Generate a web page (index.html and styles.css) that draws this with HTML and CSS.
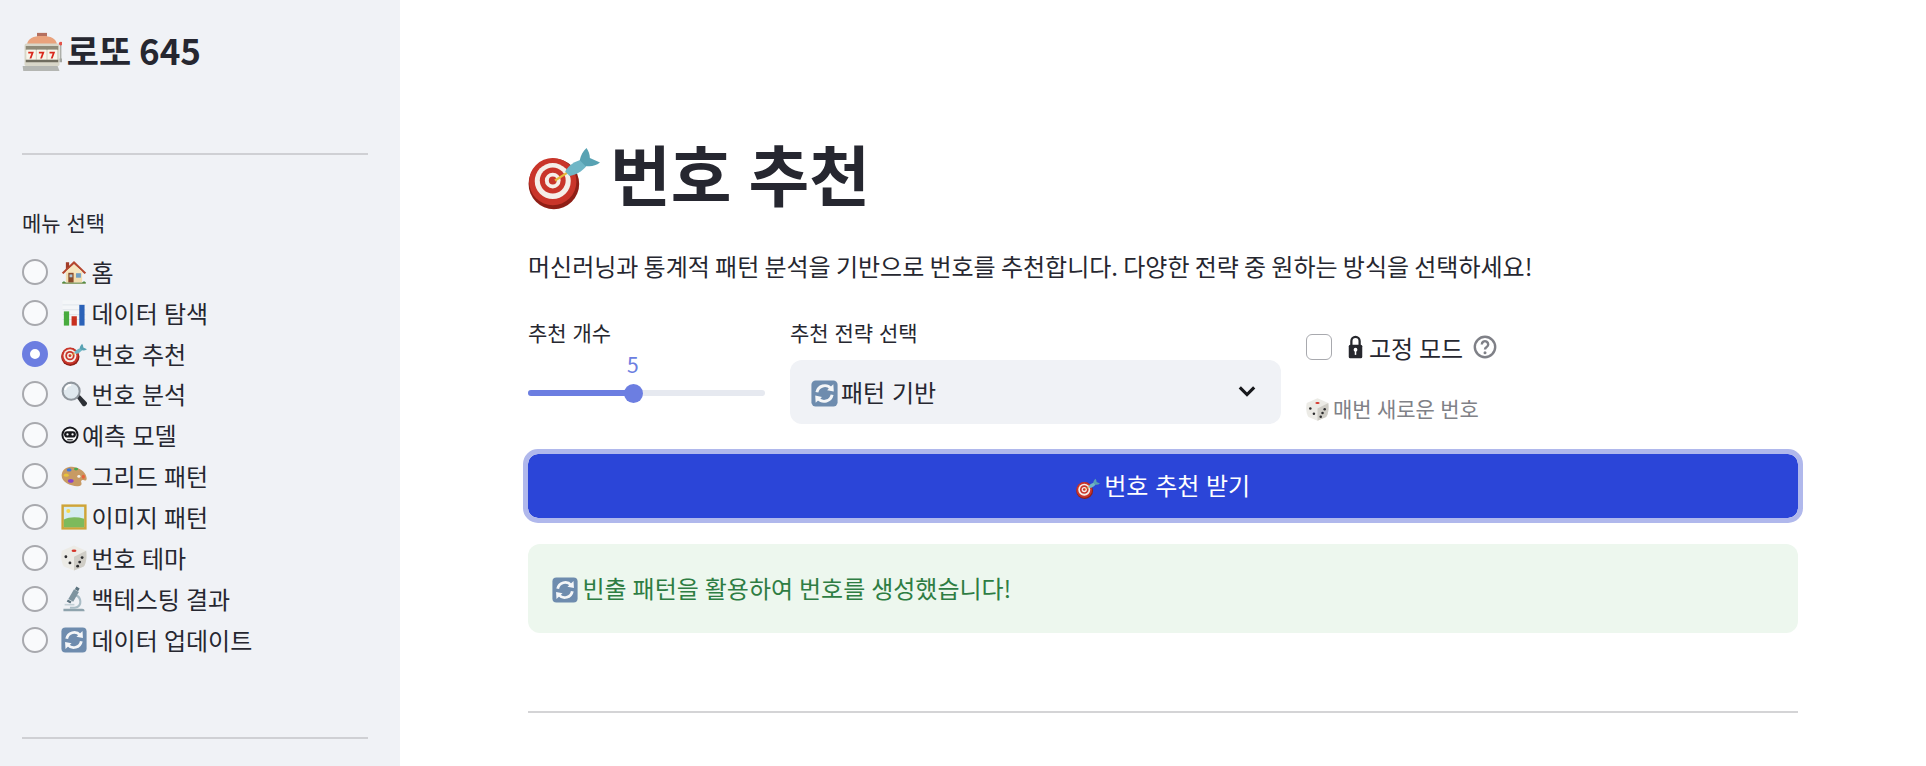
FILE: index.html
```html
<!DOCTYPE html>
<html lang="ko">
  <head>
    <title>로또 645</title>
    <meta name="viewport" content="width=device-width, initial-scale=1">
    <link rel="stylesheet" href="styles.css">
  </head>
  <body>
    <!-- emoji drawings, reused with <use> -->
    <svg class="defs" aria-hidden="true">
      <symbol id="e-slot" viewBox="0 0 64 64">
        <path d="M24 3h16v6H24z" fill="#b5705f"/>
        <path d="M8 22C9 12 18 8 32 8s23 4 24 14z" fill="#e9a27c"/>
        <rect x="4" y="20" width="56" height="36" rx="3" fill="#d8d6c8"/>
        <rect x="6" y="24" width="52" height="6" fill="#8e8a78"/>
        <rect x="7" y="30" width="15" height="16" fill="#f7f5ea"/>
        <rect x="24" y="30" width="15" height="16" fill="#f7f5ea"/>
        <rect x="41" y="30" width="15" height="16" fill="#f7f5ea"/>
        <path d="M10 33h9l-4 11h-3l3-8h-5zM27 33h9l-4 11h-3l3-8h-5zM44 33h9l-4 11h-3l3-8h-5z" fill="#d9281c"/>
        <rect x="6" y="46" width="52" height="4" fill="#6f6c5e"/>
        <path d="M1 56h56l3 8H2z" fill="#b4b6b2"/>
        <path d="M60 44h4v6h-4zM61 22h2v22h-2z" fill="#a3a5a0"/>
        <circle cx="62" cy="20" r="3" fill="#e4544a"/>
      </symbol>
      <symbol id="e-house" viewBox="0 0 64 64">
        <path d="M12 30h40v28H12z" fill="#f2ddae"/>
        <path d="M2 34 32 5l30 29-4 3L32 13 6 37z" fill="#b5472f"/>
        <path d="M12 8h8v10l-8 8z" fill="#a23c28"/>
        <path d="M32 13 12 31v5h40v-5z" fill="#f6e6bf"/>
        <rect x="18" y="34" width="13" height="24" fill="#8a4a2b"/>
        <rect x="21" y="38" width="7" height="7" fill="#a9c6d8"/>
        <rect x="37" y="35" width="12" height="11" fill="#6f9fc2"/>
        <path d="M3 59c0-5 8-5 9 0zM52 59c1-5 9-5 9 0z" fill="#3f8a3c"/>
        <rect x="3" y="58" width="58" height="3" fill="#74904f"/>
      </symbol>
      <symbol id="e-chart" viewBox="0 0 64 64">
        <rect x="4" y="1" width="56" height="62" fill="#f4f6f8"/>
        <path d="M4 12h56M4 24h56M4 36h56M4 48h56" stroke="#d3dae2" stroke-width="1.5"/>
        <rect x="7" y="28" width="13" height="35" fill="#48ab3e"/>
        <rect x="26" y="40" width="13" height="23" fill="#c8301f"/>
        <rect x="45" y="12" width="13" height="51" fill="#2b62b8"/>
      </symbol>
      <symbol id="e-dart" viewBox="0 0 64 64">
        <circle cx="23" cy="39" r="22.5" fill="#8f1f16"/>
        <circle cx="22" cy="37" r="21" fill="#c9352a"/>
        <circle cx="22" cy="36.5" r="16" fill="#f5efe9"/>
        <circle cx="22" cy="36" r="11.5" fill="#c9352a"/>
        <circle cx="22" cy="36" r="7" fill="#f5efe9"/>
        <circle cx="22" cy="36" r="3.5" fill="#c9352a"/>
        <path d="m24 36 11-7" stroke="#e5b93a" stroke-width="2"/>
        <path d="M33 28c3-6 9-9 15-11l4 6c-4 5-10 8-15 9z" fill="#6fb6c6"/>
        <path d="M46 18c1-5 3-8 6-11 2 3 3 6 3 9l9 4c-4 3-8 4-13 3z" fill="#58a2b3"/>
      </symbol>
      <symbol id="e-glass" viewBox="0 0 64 64">
        <path d="m38 40 7-7 18 19c2 3 1 5-2 8s-6 3-8 1z" fill="#2d3036"/>
        <circle cx="25" cy="25" r="21" fill="#dfe8ee" stroke="#8f969d" stroke-width="5"/>
        <path d="M10 22c2-8 8-12 15-12" fill="none" stroke="#fff" stroke-width="5"/>
      </symbol>
      <symbol id="e-robot" viewBox="0 0 64 64">
        <circle cx="32" cy="32" r="27" fill="#fff" stroke="#17181c" stroke-width="7"/>
        <rect x="11" y="19" width="42" height="22" rx="11" fill="#17181c"/>
        <circle cx="23" cy="30" r="4" fill="#fff"/>
        <circle cx="41" cy="30" r="4" fill="#fff"/>
        <path d="M22 49h20" stroke="#17181c" stroke-width="4"/>
      </symbol>
      <symbol id="e-palette" viewBox="0 0 64 64">
        <path d="M2 27C5 12 22 6 37 11c14 4 25 14 26 26 1 6-4 7-8 5-4-1-7 2-5 6 2 5-1 9-8 9C24 58-2 47 2 27z" fill="#c89a63"/>
        <ellipse cx="20" cy="17" rx="6" ry="4" fill="#3f78d8"/>
        <ellipse cx="37" cy="15" rx="5" ry="3.5" fill="#4aa84e"/>
        <ellipse cx="13" cy="30" rx="6" ry="4" fill="#e8c33a"/>
        <ellipse cx="24" cy="44" rx="7" ry="4.5" fill="#8a45c8"/>
        <ellipse cx="55" cy="34" rx="4" ry="5" fill="#e8643c"/>
        <ellipse cx="44" cy="33" rx="4" ry="3.5" fill="#f4f1ea"/>
      </symbol>
      <symbol id="e-frame" viewBox="0 0 64 64">
        <rect x="1" y="1" width="62" height="62" fill="#cfa438"/>
        <rect x="7" y="7" width="50" height="50" fill="#d6ecf2"/>
        <path d="M7 38c14-7 32-7 50-2v21H7z" fill="#7dba5c"/>
        <circle cx="18" cy="17" r="5" fill="#f5d94e"/>
      </symbol>
      <symbol id="e-die" viewBox="0 0 64 64">
        <path d="M32 1 62 14c2 16 0 31-6 39L32 63 7 53C1 44-1 30 2 14z" fill="#ecebe6"/>
        <path d="m32 29 30-15c2 16 0 31-6 39L32 63z" fill="#cfcdc6"/>
        <ellipse cx="32" cy="14" rx="6" ry="3" fill="#d5352a"/>
        <circle cx="12" cy="29" r="3.5" fill="#2c2c2e"/>
        <circle cx="22" cy="44" r="3.5" fill="#2c2c2e"/>
        <circle cx="41" cy="52" r="3.5" fill="#2c2c2e"/>
        <circle cx="46" cy="42" r="3.5" fill="#2c2c2e"/>
        <circle cx="52" cy="31" r="3.5" fill="#2c2c2e"/>
      </symbol>
      <symbol id="e-scope" viewBox="0 0 64 64">
        <path d="M6 56h46c4 0 6 2 6 6H6z" fill="#8ea3ad"/>
        <path d="M30 20c12-2 22 8 20 22-1 8-8 14-16 14H22v-5h11c7 0 12-5 12-12 0-9-6-14-14-14z" fill="#a9bcc5"/>
        <path d="m32 8 12 7-14 24-12-7z" fill="#7e949f"/>
        <path d="m38 1 8 5-4 7-8-5z" fill="#5d7480"/>
        <path d="m17 33 9 5-3 5-9-5z" fill="#5d7480"/>
        <rect x="9" y="44" width="24" height="4" fill="#c3d0d6"/>
      </symbol>
      <symbol id="e-sync" viewBox="0 0 64 64">
        <rect x="1" y="1" width="62" height="62" rx="10" fill="#6e8cae"/>
        <path d="M14 29a19 19 0 0 1 33-9" fill="none" stroke="#f4f6f8" stroke-width="7"/>
        <path d="m53 10 1 17-16-3z" fill="#f4f6f8"/>
        <path d="M50 35a19 19 0 0 1-33 9" fill="none" stroke="#f4f6f8" stroke-width="7"/>
        <path d="m11 54-1-17 16 3z" fill="#f4f6f8"/>
      </symbol>
      <symbol id="e-lock" viewBox="0 0 40 64">
        <path d="M9 28V16a11 11 0 0 1 22 0v12" fill="none" stroke="#26272d" stroke-width="6"/>
        <rect x="2" y="26" width="36" height="36" rx="4" fill="#26272d"/>
        <circle cx="20" cy="39" r="5" fill="#fff"/>
        <rect x="18" y="40" width="4" height="13" fill="#fff"/>
      </symbol>
    </svg>

    <div class="page">
      <aside class="sidebar">
        <h2 class="side-title"><svg class="emo emo-title"><use href="#e-slot"/></svg> 로또 645</h2>
        <hr class="side-rule">
        <div class="menu-label">메뉴 선택</div>
        <div class="menu">
          <div class="menu-item"><span class="radio"></span><svg class="emo"><use href="#e-house"/></svg><span>홈</span></div>
          <div class="menu-item"><span class="radio"></span><svg class="emo"><use href="#e-chart"/></svg><span>데이터 탐색</span></div>
          <div class="menu-item"><span class="radio on"></span><svg class="emo"><use href="#e-dart"/></svg><span>번호 추천</span></div>
          <div class="menu-item"><span class="radio"></span><svg class="emo"><use href="#e-glass"/></svg><span>번호 분석</span></div>
          <div class="menu-item"><span class="radio"></span><svg class="emo emo-robot"><use href="#e-robot"/></svg><span>예측 모델</span></div>
          <div class="menu-item"><span class="radio"></span><svg class="emo"><use href="#e-palette"/></svg><span>그리드 패턴</span></div>
          <div class="menu-item"><span class="radio"></span><svg class="emo"><use href="#e-frame"/></svg><span>이미지 패턴</span></div>
          <div class="menu-item"><span class="radio"></span><svg class="emo"><use href="#e-die"/></svg><span>번호 테마</span></div>
          <div class="menu-item"><span class="radio"></span><svg class="emo"><use href="#e-scope"/></svg><span>백테스팅 결과</span></div>
          <div class="menu-item"><span class="radio"></span><svg class="emo"><use href="#e-sync"/></svg><span>데이터 업데이트</span></div>
        </div>
        <hr class="side-rule side-rule-low">
      </aside>

      <main class="content">
        <h1 class="page-title"><svg class="emo emo-h1"><use href="#e-dart"/></svg>번호 추천</h1>
        <p class="lead">머신러닝과 통계적 패턴 분석을 기반으로 번호를 추천합니다. 다양한 전략 중 원하는 방식을 선택하세요!</p>

        <div class="controls">
          <div class="field">
            <div class="field-label">추천 개수</div>
            <div class="slider">
              <span class="slider-value">5</span>
              <div class="slider-fill"></div>
              <span class="slider-thumb"></span>
            </div>
          </div>
          <div class="field">
            <div class="field-label">추천 전략 선택</div>
            <div class="select">
              <span class="select-text"><svg class="emo"><use href="#e-sync"/></svg>패턴 기반</span>
              <svg class="chevron" viewBox="0 0 20 20"><path d="m4 7 6 6 6-6" fill="none" stroke="#17181c" stroke-width="2.6"/></svg>
            </div>
          </div>
          <div class="field field-toggle">
            <div class="toggle">
              <span class="checkbox"></span>
              <svg class="emo-lock"><use href="#e-lock"/></svg>
              <span>고정 모드</span>
              <svg class="help" viewBox="0 0 24 24"><circle cx="12" cy="12" r="10.2" fill="none" stroke="#7f8087" stroke-width="2.4"/><path d="M8.8 9.4a3.2 3.2 0 1 1 4.9 2.7c-1.1.7-1.7 1.2-1.7 2.5" fill="none" stroke="#7f8087" stroke-width="2.4"/><circle cx="12" cy="17.8" r="1.5" fill="#7f8087"/></svg>
            </div>
            <div class="caption"><svg class="emo emo-small"><use href="#e-die"/></svg>매번 새로운 번호</div>
          </div>
        </div>

        <button class="primary"><svg class="emo emo-btn"><use href="#e-dart"/></svg>번호 추천 받기</button>

        <div class="alert"><svg class="emo"><use href="#e-sync"/></svg>빈출 패턴을 활용하여 번호를 생성했습니다!</div>

        <hr class="main-rule">
      </main>
    </div>
  </body>
</html>
```

FILE: styles.css
```css
*{
  box-sizing:border-box;
}
html, body{
  margin:0;
  height:100%;
  overflow:hidden;
}
body{
  font-family:"Noto Sans CJK KR","Noto Sans",sans-serif;
  font-size:24px;
  color:#262730;
  background:#fff;
}
.defs{
  position:absolute;
  width:0;
  height:0;
}
.page{
  display:flex;
  height:766px;
}

/* sidebar */
.sidebar{
  width:400px;
  flex:none;
  padding:24px 32px 0 22px;
  background:#f0f2f6;
  overflow:hidden;
}
.side-title{
  margin:0;
  font-size:35px;
  line-height:52px;
  font-weight:700;
  word-spacing:-2px;
}
.emo{
  width:26px;
  height:26px;
  flex:none;
  vertical-align:-5px;
  margin-right:4.5px;
}
.emo-title{
  width:40px;
  height:40px;
  vertical-align:-6px;
  margin-right:-3px;
}
.side-rule{
  margin:77px 0 0;
  border:0;
  border-top:2px solid #cfd0d4;
}
.side-rule-low{
  margin-top:77px;
}
.menu-label{
  margin-top:51px;
  font-size:21px;
  line-height:32px;
}
.menu{
  margin-top:13.5px;
}
.menu-item{
  display:flex;
  align-items:center;
  height:40.85px;
  line-height:36px;
  word-spacing:-0.5px;
}
.radio{
  width:26px;
  height:26px;
  flex:none;
  margin-right:13px;
  border:2.5px solid #a8a9ae;
  border-radius:50%;
  background:#f9fafc;
}
.radio.on{
  border:8px solid #6c7ee1;
  background:#fff;
}
.emo-robot{
  width:18px;
  height:18px;
  margin:0 3px 0 0;
}

/* main column */
.content{
  flex:1;
  padding:116px 128px 0;
}
.page-title{
  display:flex;
  align-items:center;
  margin:0;
  font-size:66px;
  line-height:112px;
  font-weight:700;
  word-spacing:-1.5px;
}
.emo-h1{
  width:72px;
  height:72px;
  margin:8px 10px 0 0;
}
.lead{
  margin:20px 0 0;
  line-height:36px;
  word-spacing:-1.5px;
}
.controls{
  display:grid;
  grid-template-columns:237px 491px 1fr;
  column-gap:25px;
  margin-top:32px;
}
.field-label{
  font-size:21px;
  line-height:32px;
}

/* slider */
.slider{
  position:relative;
  height:6px;
  margin-top:42px;
  border-radius:3px;
  background:#e6e9f0;
}
.slider-fill{
  width:106px;
  height:6px;
  border-radius:3px;
  background:#6c7ee1;
}
.slider-thumb{
  position:absolute;
  left:96px;
  top:-6px;
  width:19px;
  height:19px;
  border-radius:50%;
  background:#6c7ee1;
}
.slider-value{
  position:absolute;
  left:99px;
  top:-42px;
  font-size:21px;
  line-height:32px;
  color:#6c7ee1;
}

/* select */
.select{
  display:flex;
  align-items:center;
  justify-content:space-between;
  height:64px;
  margin-top:12px;
  padding:0 22px 2px 21px;
  border-radius:12px;
  background:#f0f2f6;
}
.select .emo{
  width:27px;
  height:27px;
  margin-right:3px;
}
.chevron{
  width:24px;
  height:24px;
}

/* checkbox column */
.field-toggle{
  padding-top:15px;
}
.toggle{
  display:flex;
  align-items:center;
  height:32px;
  word-spacing:-1px;
}
.checkbox{
  width:26px;
  height:26px;
  margin-right:16px;
  border:1px solid #a8a9ae;
  border-radius:6px;
  background:#fff;
}
.emo-lock{
  width:15px;
  height:24px;
  margin-right:6px;
}
.help{
  width:24px;
  height:24px;
  margin-left:10px;
}
.caption{
  margin-top:29px;
  font-size:21px;
  line-height:32px;
  color:#808187;
  word-spacing:-0.6px;
}
.emo-small{
  width:23px;
  height:23px;
  vertical-align:-4px;
  margin-right:4px;
}

/* button + alert */
.primary{
  display:block;
  width:100%;
  height:64px;
  margin-top:30px;
  padding:0 0 4px;
  border:0;
  border-radius:10px;
  outline:5px solid #b0b8ec;
  font:inherit;
  color:#fff;
  background:#2b45d8;
}
.emo-btn{
  width:24px;
  height:24px;
}
.alert{
  height:89px;
  margin-top:26px;
  padding:0 24px;
  border-radius:12px;
  line-height:87px;
  color:#2e7d43;
  background:#edf7ee;
  word-spacing:-0.8px;
}
.main-rule{
  margin:78px 0 0;
  border:0;
  border-top:2px solid #d4d4d6;
}
```
